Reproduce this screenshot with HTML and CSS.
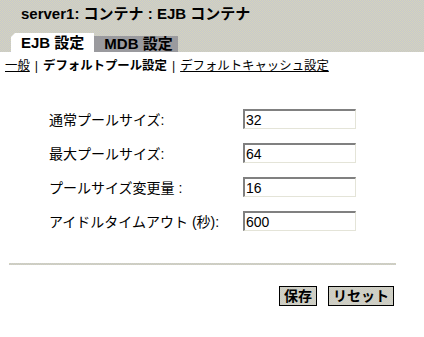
FILE: index.html
```html
<!DOCTYPE html>
<html lang="ja">

<head>
    <meta charset="UTF-8">
    <title>EJB コンテナ</title>
    <link rel="stylesheet" href="styles.css">
</head>

<body>
    <div class="masthead">
        <h1 class="title">server1: コンテナ : EJB コンテナ</h1>
        <div class="tabs">
            <span class="tab tab-active">EJB 設定</span>
            <span class="tab">MDB 設定</span>
        </div>
    </div>

    <div class="subnav">
        <a href="#">一般</a><span class="bar">|</span><b>デフォルトプール設定</b><span class="bar">|</span><a href="#">デフォルトキャッシュ設定</a>
    </div>

    <form class="pool-form">
        <label for="steady">通常プールサイズ:</label>
        <input type="text" id="steady" value="32">

        <label for="max">最大プールサイズ:</label>
        <input type="text" id="max" value="64">

        <label for="resize">プールサイズ変更量 :</label>
        <input type="text" id="resize" value="16">

        <label for="idle">アイドルタイムアウト (秒):</label>
        <input type="text" id="idle" value="600">
    </form>

    <div class="sep"></div>

    <div class="actions">
        <button class="btn">保存</button>
        <button class="btn">リセット</button>
    </div>
</body>

</html>
```

FILE: styles.css
```css
body {
    margin: 0;
    font-family: "Liberation Sans", "Noto Sans CJK JP", sans-serif;
    color: #000;
    background: #fff;
}

/* dithered grey/khaki fill used by header, rule and buttons */
.masthead,
.sep,
.btn {
    background-color: #cfcfc4;
    background-image: repeating-conic-gradient(#c6c6d0 0 25%, #d6d6b8 0 50%);
    background-size: 2px 2px;
}

.masthead {
    height: 52px;
    padding-left: 11px;
    box-sizing: border-box;
}

.title {
    margin: 0;
    padding: 4px 0 0 10px;
    font-size: 15px;
    line-height: 20px;
    font-weight: bold;
}

.tabs {
    display: flex;
    align-items: flex-end;
    margin-top: 9px;
    height: 19px;
}

.tab {
    display: block;
    font-size: 15px;
    font-weight: bold;
    line-height: 16px;
    padding: 0 5px 0 10px;
    height: 16px;
    background: #9a9a9e;
}

.tab-active {
    background: #fff;
    height: 19px;
    line-height: 20px;
    padding: 0 10px;
    clip-path: polygon(4px 0, 100% 0, 100% 100%, 0 100%, 0 4px);
}

.subnav {
    padding: 6px 0 0 5px;
    font-size: 12.4px;
    line-height: 16px;
}

.subnav a {
    color: #000;
}

.bar {
    margin: 0 5px;
}

.pool-form {
    display: grid;
    grid-template-columns: 194px 113px;
    row-gap: 14px;
    align-items: center;
    padding: 35px 0 0 49px;
    font-size: 14px;
}

.pool-form input {
    width: 113px;
    height: 20px;
    box-sizing: border-box;
    margin: 0;
    padding: 0 0 0 1px;
    font: 14px "Liberation Sans", sans-serif;
    border-style: solid;
    border-width: 2px 1px 1px 2px;
    border-color: #808080 #e4e4d8 #e4e4d8 #808080;
    background: #fff;
}

.sep {
    margin: 32px 0 0 9px;
    width: 387px;
    height: 2px;
}

.actions {
    display: flex;
    justify-content: flex-end;
    gap: 11px;
    padding: 21px 30px 0 0;
}

.btn {
    height: 20px;
    padding: 0 4px;
    border: 1px solid #000;
    font: bold 14px "Liberation Sans", "Noto Sans CJK JP", sans-serif;
    line-height: 16px;
    color: #000;
}
```
